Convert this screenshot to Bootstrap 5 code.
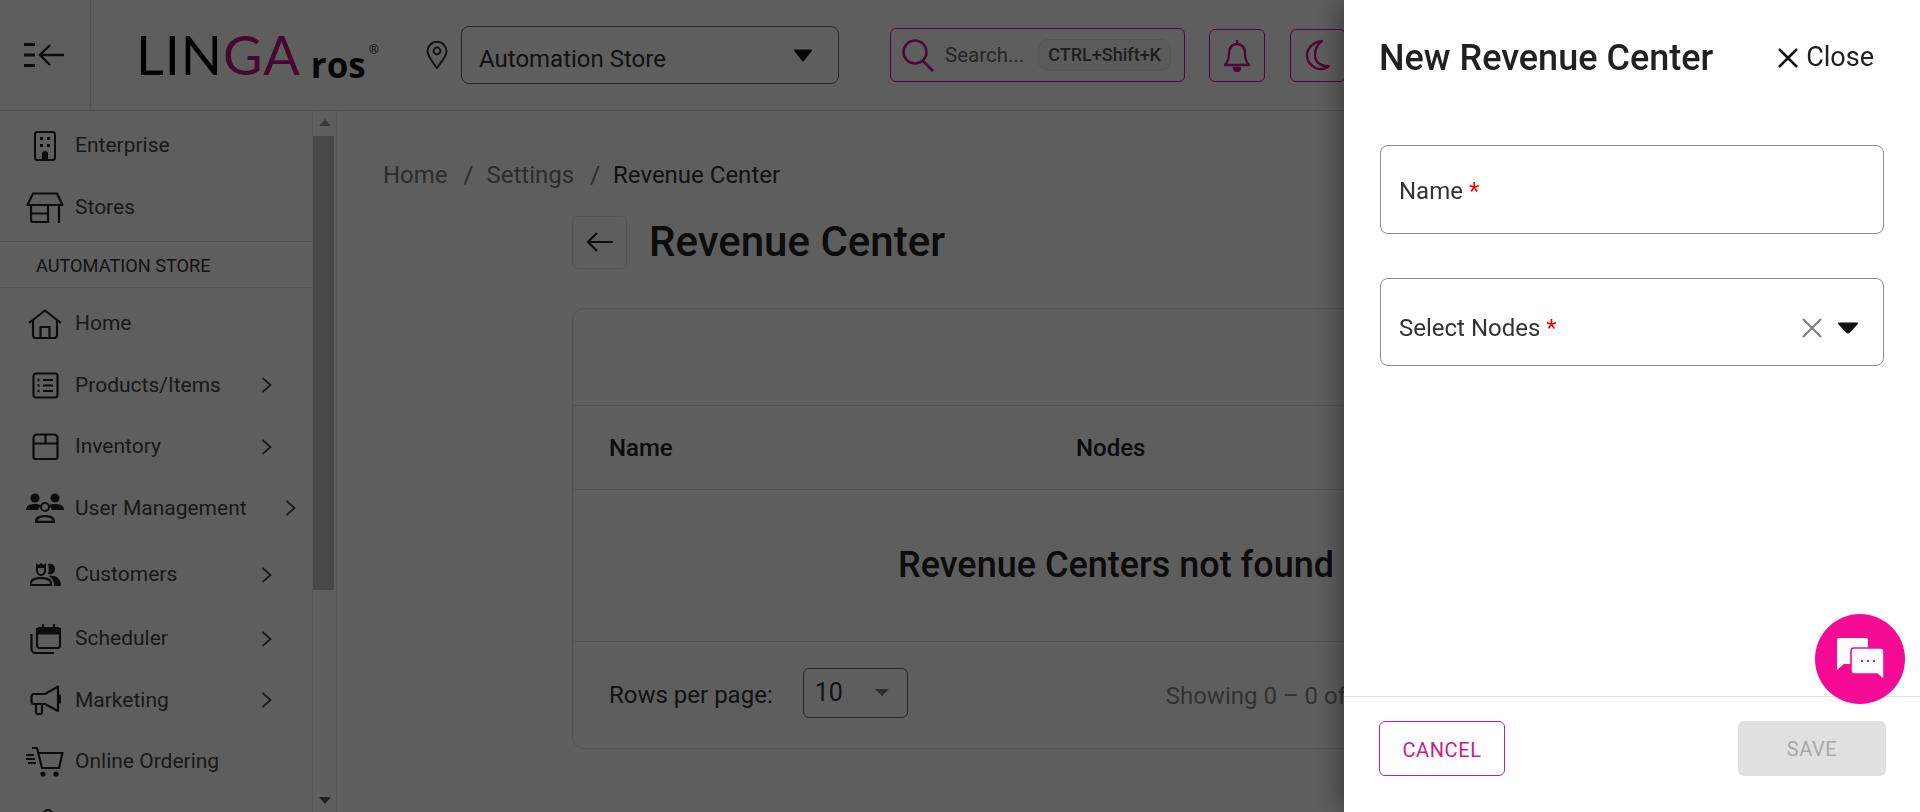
<!DOCTYPE html>
<html lang="en">
<head>
    <meta charset="UTF-8">
    <meta name="viewport" content="width=device-width, initial-scale=1.0">
    <title>Revenue Center</title>
    <link href="https://cdn.jsdelivr.net/npm/bootstrap@5.3.0/dist/css/bootstrap.min.css" rel="stylesheet">
    <style>
        html, body { height: 812px; overflow: hidden; }
        body { font-family: Roboto, "Liberation Sans", sans-serif; color: #212121; background: #fff; }
        svg { display: block; flex: none; }

        /* top bar */
        .top-bar { height: 111px; border-bottom: 1px solid #dcdcdc; flex: none; }
        .menu-cell { width: 91px; height: 110px; border-right: 1px solid #dcdcdc; padding-left: 24px; flex: none; }
        .logo-box { width: 335px; padding-left: 45px; flex: none; line-height: 1; }
        .logo-linga { font-family: Lato, sans-serif; font-weight: 400; font-size: 54px; letter-spacing: 1px; color: #000; }
        .logo-linga b { font-weight: 400; color: #c4147f; }
        .logo-ros { font-family: "Open Sans", sans-serif; font-weight: 700; font-size: 35px; margin-left: 10px; color: #111; }
        .logo-reg { font-size: 13px; color: #333; margin-left: 3px; align-self: flex-start; margin-top: 15px; }
        .store-select { width: 378px; height: 58px; margin-left: 13px; border: 1px solid #666; border-radius: 8px; padding: 0 25px 0 17px; font-size: 24px; color: #333; flex: none; }
        .store-select span { padding-top: 8px; }
        .search-box { width: 295px; height: 54px; margin-left: 51px; border: 1px solid #d6188f; border-radius: 6px; padding: 0 13px 0 11px; flex: none; }
        .search-text { font-size: 20.5px; color: #666; margin-left: 11px; padding-top: 1px; }
        .kbd-chip { margin-left: auto; font-size: 18px; font-weight: 500; color: #555; background: #f7f7f7; border: 1px solid #e8e8e8; border-radius: 10px; padding: 3px 9px; white-space: nowrap; line-height: 24px; }
        .tool-btn { width: 56px; height: 53px; margin-left: 24px; border: 1px solid #d6188f; border-radius: 6px; flex: none; }
        .tool-btn + .tool-btn { margin-left: 25px; }

        /* sidebar */
        .side-bar { width: 337px; height: 701px; border-right: 1px solid #e4e4e4; flex: none; overflow: hidden; }
        .side-list { width: 313px; padding-top: 4px; border-right: 1px solid #ececec; flex: none; }
        .side-row { height: 61.5px; padding-left: 26px; font-size: 21px; color: #444; }
        .side-row .side-ico { width: 38px; margin-right: 11px; }
        .side-row .side-arrow { margin-left: auto; margin-right: 40px; }
        .side-row.far-arrow .side-arrow { margin-right: 16px; }
        .side-sep { height: 47px; margin-top: 3px; margin-bottom: 5px; border-top: 1px solid #e4e4e4; border-bottom: 1px solid #e4e4e4; padding: 2px 0 0 36px; font-size: 18.2px; color: #333; }
        .gap-five { margin-top: 5px; }
        .gap-two { margin-top: 2.500px; }
        .track { width: 23px; flex: none; padding-top: 8px; }
        .thumb { width: 21px; height: 454px; margin: 10px 0 0 -2px; background: #c4c4c4; }
        .track-spacer { flex: 1; }

        /* main */
        .page-body { padding: 0 0 0 46px; flex: 1; min-width: 0; }
        .crumbs { height: 28px; margin-top: 50px; font-size: 24px; line-height: 28px; color: #777; }
        .crumbs span.sep { margin: 0 13px 0 16px; }
        .crumbs .here { color: #333; }
        .title-row { margin: 27px 0 0 189px; height: 52px; }
        .back-btn { width: 55px; height: 53px; border: 1px solid #e2e2e2; border-radius: 6px; }
        .page-title { font-size: 42px; font-weight: 500; margin: 0 0 0 22px; color: #212121; line-height: 1; }
        .rev-card { width: 1100px; margin: 40px 0 0 189px; height: 441px; border: 1px solid #e0e0e0; border-radius: 12px; }
        .rev-tools { height: 97px; border-bottom: 1px solid #e0e0e0; }
        .rev-head { height: 84px; border-bottom: 1px solid #e0e0e0; font-size: 24px; font-weight: 500; padding-left: 36px; }
        .rev-head .name-col { width: 467px; }
        .rev-empty { height: 152px; border-bottom: 1px solid #e0e0e0; padding-left: 325px; padding-bottom: 1px; font-size: 36px; font-weight: 500; white-space: nowrap; }
        .rev-foot { padding-left: 36px; height: 105px; font-size: 24px; color: #333; white-space: nowrap; }
        .rows-select { width: 105px; height: 50px; margin: 0 0 4px 30px; border: 1px solid #666; border-radius: 6px; padding: 0 18px 0 11px; font-size: 25px; }
        .rows-caret { width: 0; height: 0; border-left: 7px solid transparent; border-right: 7px solid transparent; border-top: 7px solid #777; }
        .showing { margin-left: 258px; color: #888; padding-top: 3px; }

        /* overlay and side panel */
        .dim-layer { position: fixed; inset: 0; background: rgba(0, 0, 0, .63); z-index: 10; }
        .edit-panel { position: fixed; top: 0; right: 0; bottom: 0; width: 576px; background: #fff; z-index: 20; box-shadow: -6px 0 24px rgba(0, 0, 0, .35); }
        .panel-head { height: 115px; padding: 0 46px 0 35px; }
        .panel-title { font-size: 36px; font-weight: 500; margin: 0; line-height: 1; color: #212121; }
        .panel-close { font-size: 27px; color: #212121; gap: 7px; }
        .panel-fields { padding: 30px 36px 0 36px; }
        .field-box { height: 89px; border: 1px solid #8c8c8c; border-radius: 8px; padding: 3px 25px 0 18px; font-size: 24px; color: #333; margin-bottom: 44px; }
        .field-box.low-row { height: 88px; padding-top: 12px; }
        .req { color: #f00; }
        .panel-foot { height: 116px; border-top: 1px solid #e0e0e0; padding: 24px 34px 0 35px; }
        .btn-cancel { width: 126px; height: 55px; border: 1px solid #cb1b8b; color: #cb1b8b; background: #fff; font-size: 20px; font-weight: 400; border-radius: 6px; letter-spacing: .6px; padding: 3px 0 0; }
        .btn-save { width: 148px; height: 55px; border: 0; background: #e0e0e0; color: #a8a8a8; font-size: 20px; font-weight: 400; border-radius: 6px; letter-spacing: .6px; padding: 0; }
        .chat-fab { position: fixed; left: 1815px; top: 614px; width: 90px; height: 90px; border-radius: 50%; background: #f40a94; z-index: 30; }
    </style>
</head>
<body class="d-flex flex-column">

    <!-- Top bar -->
    <header class="top-bar d-flex align-items-center">
        <div class="menu-cell d-flex align-items-center">
            <svg width="41" height="26" viewBox="0 0 41 26" fill="none" stroke="#222" stroke-width="2.4">
                <path d="M0 2.5h11M0 13h11M0 23.5h11" stroke-width="2.8"/>
                <path d="M40 13H17M26 3 16 13l10 10"/>
            </svg>
        </div>
        <div class="logo-box d-flex align-items-end">
            <span class="logo-linga">LIN<b>GA</b></span>
            <span class="logo-ros">ros</span>
            <span class="logo-reg">®</span>
        </div>
        <svg width="22" height="28" viewBox="0 0 22 28" fill="none" stroke="#333" stroke-width="2">
            <path d="M11 27C6 20 1.5 15 1.5 10.2a9.5 9.5 0 0 1 19 0C20.500 15 16 20 11 27Z"/>
            <circle cx="11" cy="10" r="3.400"/>
        </svg>
        <div class="store-select d-flex align-items-center justify-content-between">
            <span>Automation Store</span>
            <svg width="20" height="13" viewBox="0 0 20 13"><path d="M1 1.500a1 1 0 0 1 1-1h16a1 1 0 0 1 .8 1.600l-8 10a1 1 0 0 1-1.600 0l-8-10A1 1 0 0 1 1 1.500Z" fill="#111"/></svg>
        </div>
        <div class="search-box d-flex align-items-center">
            <svg width="32" height="33" viewBox="0 0 32 33" fill="none" stroke="#d6188f" stroke-width="2.600"><circle cx="13" cy="13" r="11.500"/><path d="M21 22l10 10"/></svg>
            <span class="search-text">Search...</span>
            <span class="kbd-chip">CTRL+Shift+K</span>
        </div>
        <div class="tool-btn d-flex align-items-center justify-content-center">
            <svg width="28" height="33" viewBox="0 0 28 33" fill="none" stroke="#d6188f" stroke-width="2.400"><path d="M2 26c3-3 4-6 4-12 0-5 3-9 8-9s8 4 8 9c0 6 1 9 4 12Z" stroke-linejoin="round"/><path d="M14 1v4" /><path d="M11 29a3 3 0 0 0 6 0Z" fill="#d6188f"/></svg>
        </div>
        <div class="tool-btn d-flex align-items-center justify-content-center">
            <svg width="26" height="32" viewBox="0 0 26 32" fill="none" stroke="#d6188f" stroke-width="2.400"><path d="M17 2C8 3 2 9 2 16.500S9 30 16 30c3 0 6-1 8-3-8 1-14-4-14-11S13 5 17 2Z" stroke-linejoin="round"/></svg>
        </div>
    </header>

    <div class="d-flex flex-grow-1">
        <!-- Sidebar -->
        <aside class="side-bar d-flex">
            <nav class="side-list">
                <div class="side-row d-flex align-items-center">
                    <span class="side-ico d-flex justify-content-center"><svg width="24" height="30" viewBox="0 0 24 30" fill="none" stroke="#222" stroke-width="2"><rect x="2" y="1" width="20" height="28" rx="2.500"/><path d="M7 6h3v3H7zM14 6h3v3h-3zM7 13h3v3H7zM14 13h3v3h-3z" fill="#222" stroke="none"/><path d="M9 28v-5a3 3 0 0 1 6 0v5Z" fill="#222" stroke="none"/></svg></span>
                    <span>Enterprise</span>
                </div>
                <div class="side-row d-flex align-items-center">
                    <span class="side-ico d-flex justify-content-center"><svg width="38" height="31" viewBox="0 0 38 31" fill="none" stroke="#222" stroke-width="2.200" stroke-linejoin="round"><path d="M7 1.500h24l5.500 11.500h-35Z"/><path d="M5 13v15a2 2 0 0 0 2 2h15V13M5 21.500h17M33 13v18"/></svg></span>
                    <span>Stores</span>
                </div>
                <div class="side-sep d-flex align-items-center">AUTOMATION STORE</div>
                <div class="side-row d-flex align-items-center">
                    <span class="side-ico d-flex justify-content-center"><svg width="34" height="30" viewBox="0 0 34 30" fill="none" stroke="#222" stroke-width="2.200" stroke-linejoin="round"><path d="M1 14 17 1.500 33 14"/><path d="M5 11v15a3 3 0 0 0 3 3h18a3 3 0 0 0 3-3V11"/><path d="M12.500 29V18h9v11"/></svg></span>
                    <span>Home</span>
                </div>
                <div class="side-row d-flex align-items-center">
                    <span class="side-ico d-flex justify-content-center"><svg width="27" height="27" viewBox="0 0 27 27" fill="none" stroke="#222" stroke-width="2.200"><rect x="1.500" y="1.500" width="24" height="24" rx="2.500"/><path d="M11 8h10M11 13.500h10M11 19h10"/><path d="M5.500 8h2M5.500 13.500h2M5.500 19h2" stroke-width="2.600"/></svg></span>
                    <span>Products/Items</span>
                    <svg class="side-arrow" width="11" height="16" viewBox="0 0 11 16" fill="none" stroke="#444" stroke-width="1.800"><path d="M1.500 1 9.500 8l-8 7"/></svg>
                </div>
                <div class="side-row d-flex align-items-center">
                    <span class="side-ico d-flex justify-content-center"><svg width="27" height="27" viewBox="0 0 27 27" fill="none" stroke="#222" stroke-width="2.200"><path d="M5 1.500h17a3.500 3.500 0 0 1 3.500 3.500v19a2 2 0 0 1-2 2h-20a2 2 0 0 1-2-2V5A3.500 3.500 0 0 1 5 1.500ZM1.500 10.500h24M13.500 1.500v9"/></svg></span>
                    <span>Inventory</span>
                    <svg class="side-arrow" width="11" height="16" viewBox="0 0 11 16" fill="none" stroke="#444" stroke-width="1.800"><path d="M1.500 1 9.500 8l-8 7"/></svg>
                </div>
                <div class="side-row far-arrow d-flex align-items-center">
                    <span class="side-ico d-flex justify-content-center"><svg width="38" height="31" viewBox="0 0 38 31" fill="#222"><circle cx="9" cy="5" r="4.500"/><circle cx="29" cy="5" r="4.500"/><path d="M0 17c0-4 3-6 9-6 3 0 5 .5 6.500 2-2 1-3 2.500-3.500 4ZM38 17c0-4-3-6-9-6-3 0-5 .5-6.500 2 2 1 3 2.500 3.500 4Z"/><circle cx="19" cy="14" r="4" fill="none" stroke="#222" stroke-width="2"/><path d="M9 30v-2c0-4 4-6 10-6s10 2 10 6v2Zm2.500-2.200h15c-.5-2-3-3.500-7.500-3.500s-7 1.500-7.500 3.500Z"/></svg></span>
                    <span>User Management</span>
                    <svg class="side-arrow" width="11" height="16" viewBox="0 0 11 16" fill="none" stroke="#444" stroke-width="1.800"><path d="M1.500 1 9.500 8l-8 7"/></svg>
                </div>
                <div class="side-row gap-five d-flex align-items-center">
                    <span class="side-ico d-flex justify-content-center"><svg width="31" height="24" viewBox="0 0 31 24" fill="#222"><path d="M6 0l2.500 2L11 0l2.500 2L16 0v8a5 5 0 0 1-10 0Zm2 5v3a3 3 0 0 0 6 0V5Z"/><path d="M18 1c4-1 7 1 7 5s-3 6-7 5c1-3 1-7 0-10Z"/><path d="M0 23v-3c0-4 4-6 11-6s11 2 11 6v3Zm2.200-2h17.600v-1c0-2-3-3.800-8.800-3.800S2.200 18 2.200 20Z"/><path d="M19 13c6-1 12 2 12 10h-7c0-4-1-7-5-10Z"/></svg></span>
                    <span>Customers</span>
                    <svg class="side-arrow" width="11" height="16" viewBox="0 0 11 16" fill="none" stroke="#444" stroke-width="1.800"><path d="M1.500 1 9.500 8l-8 7"/></svg>
                </div>
                <div class="side-row gap-two d-flex align-items-center">
                    <span class="side-ico d-flex justify-content-center"><svg width="31" height="30" viewBox="0 0 31 30" fill="none" stroke="#222" stroke-width="2.200"><rect x="7" y="4" width="23" height="20" rx="2.500"/><path d="M7 5h23v4.500H7Z" fill="#222"/><path d="M13 0v5M24 0v5"/><path d="M1.500 10v15a4 4 0 0 0 4 4H24"/></svg></span>
                    <span>Scheduler</span>
                    <svg class="side-arrow" width="11" height="16" viewBox="0 0 11 16" fill="none" stroke="#444" stroke-width="1.800"><path d="M1.500 1 9.500 8l-8 7"/></svg>
                </div>
                <div class="side-row d-flex align-items-center">
                    <span class="side-ico d-flex justify-content-center"><svg width="31" height="30" viewBox="0 0 31 30" fill="none" stroke="#222" stroke-width="2.200" stroke-linejoin="round"><path d="M28 1.500 15 9H4a2.500 2.500 0 0 0-2.500 2.500v5A2.500 2.500 0 0 0 4 19h11l13 7Z"/><path d="M29 10.500a3 3 0 0 1 0 7" fill="#222"/><path d="M6 19v8a2 2 0 0 0 2 2h2a2 2 0 0 0 2-2v-8"/></svg></span>
                    <span>Marketing</span>
                    <svg class="side-arrow" width="11" height="16" viewBox="0 0 11 16" fill="none" stroke="#444" stroke-width="1.800"><path d="M1.500 1 9.500 8l-8 7"/></svg>
                </div>
                <div class="side-row d-flex align-items-center">
                    <span class="side-ico d-flex justify-content-center"><svg width="38" height="30" viewBox="0 0 38 30" fill="none" stroke="#222" stroke-width="2.200"><path d="M6 1h5l5 20h17l3.500-15H12"/><circle cx="17" cy="27" r="2.600" fill="#222" stroke="none"/><circle cx="30" cy="27" r="2.600" fill="#222" stroke="none"/><path d="M0 8h8M0 12h9M2 16h8" stroke-width="2"/></svg></span>
                    <span>Online Ordering</span>
                </div>
                <div class="side-row d-flex align-items-center">
                    <span class="side-ico d-flex justify-content-center"><svg width="34" height="30" viewBox="0 0 34 30" fill="none" stroke="#222" stroke-width="2.200"><circle cx="20" cy="6" r="4"/><path d="M4 16h26v12H4Z"/></svg></span>
                </div>
            </nav>
            <div class="track d-flex flex-column align-items-center">
                <svg width="12" height="7" viewBox="0 0 12 7"><path d="M6 0l6 7H0Z" fill="#9a9a9a"/></svg>
                <div class="thumb"></div>
                <div class="track-spacer"></div>
                <svg class="mb-2" width="12" height="7" viewBox="0 0 12 7"><path d="M0 0h12L6 7Z" fill="#555"/></svg>
            </div>
        </aside>

        <!-- Page -->
        <main class="page-body">
            <div class="crumbs"><span>Home</span><span class="sep">/</span><span>Settings</span><span class="sep">/</span><span class="here">Revenue Center</span></div>
            <div class="title-row d-flex align-items-center">
                <div class="back-btn d-flex align-items-center justify-content-center">
                    <svg width="28" height="22" viewBox="0 0 28 22" fill="none" stroke="#222" stroke-width="2.200"><path d="M27 11H2M11 2l-9 9 9 9"/></svg>
                </div>
                <h1 class="page-title">Revenue Center</h1>
            </div>
            <section class="rev-card">
                <div class="rev-tools"></div>
                <div class="rev-head d-flex align-items-center"><span class="name-col">Name</span><span>Nodes</span></div>
                <div class="rev-empty d-flex align-items-center">Revenue Centers not found</div>
                <div class="rev-foot d-flex align-items-center">
                    <span>Rows per page:</span>
                    <div class="rows-select d-flex align-items-center justify-content-between"><span>10</span><span class="rows-caret"></span></div>
                    <span class="showing">Showing 0 – 0 of 0</span>
                </div>
            </section>
        </main>
    </div>

    <div class="dim-layer"></div>

    <!-- New revenue center panel -->
    <aside class="edit-panel d-flex flex-column">
        <div class="panel-head d-flex align-items-center justify-content-between">
            <h2 class="panel-title">New Revenue Center</h2>
            <div class="panel-close d-flex align-items-center">
                <svg width="22" height="22" viewBox="0 0 22 22" fill="none" stroke="#111" stroke-width="2.500"><path d="M2 2l18 18M20 2 2 20"/></svg>
                <span>Close</span>
            </div>
        </div>
        <div class="panel-fields flex-grow-1">
            <div class="field-box d-flex align-items-center"><span>Name <span class="req">*</span></span></div>
            <div class="field-box low-row d-flex align-items-center justify-content-between">
                <span>Select Nodes <span class="req">*</span></span>
                <span class="d-flex align-items-center gap-3">
                    <svg width="20" height="20" viewBox="0 0 20 20" fill="none" stroke="#7d7d7d" stroke-width="2"><path d="M1 1l18 18M19 1 1 19"/></svg>
                    <svg width="20" height="12" viewBox="0 0 20 12"><path d="M1 .5h18a1 1 0 0 1 .7 1.700l-8 8.500a2.500 2.500 0 0 1-3.400 0L.3 2.200A1 1 0 0 1 1 .5Z" fill="#111"/></svg>
                </span>
            </div>
        </div>
        <div class="panel-foot d-flex justify-content-between align-items-start">
            <button class="btn btn-cancel" type="button">CANCEL</button>
            <button class="btn btn-save" type="button">SAVE</button>
        </div>
    </aside>

    <div class="chat-fab d-flex align-items-center justify-content-center">
        <svg width="47" height="42" viewBox="0 0 47 42">
            <path d="M2 0h27a2 2 0 0 1 2 2v24H7l-7 6V2a2 2 0 0 1 2-2Z" fill="#fff"/>
            <path d="M17 10h27a3 3 0 0 1 3 3v29l-7-6H17a3 3 0 0 1-3-3V13a3 3 0 0 1 3-3Z" fill="#fff" stroke="#f40a94" stroke-width="1.600"/>
            <path d="M24 22h2v2h-2zM30 22h2v2h-2zM36 22h2v2h-2z" fill="#f40a94"/>
        </svg>
    </div>

    <script src="https://cdn.jsdelivr.net/npm/bootstrap@5.3.0/dist/js/bootstrap.bundle.min.js"></script>
</body>
</html>
